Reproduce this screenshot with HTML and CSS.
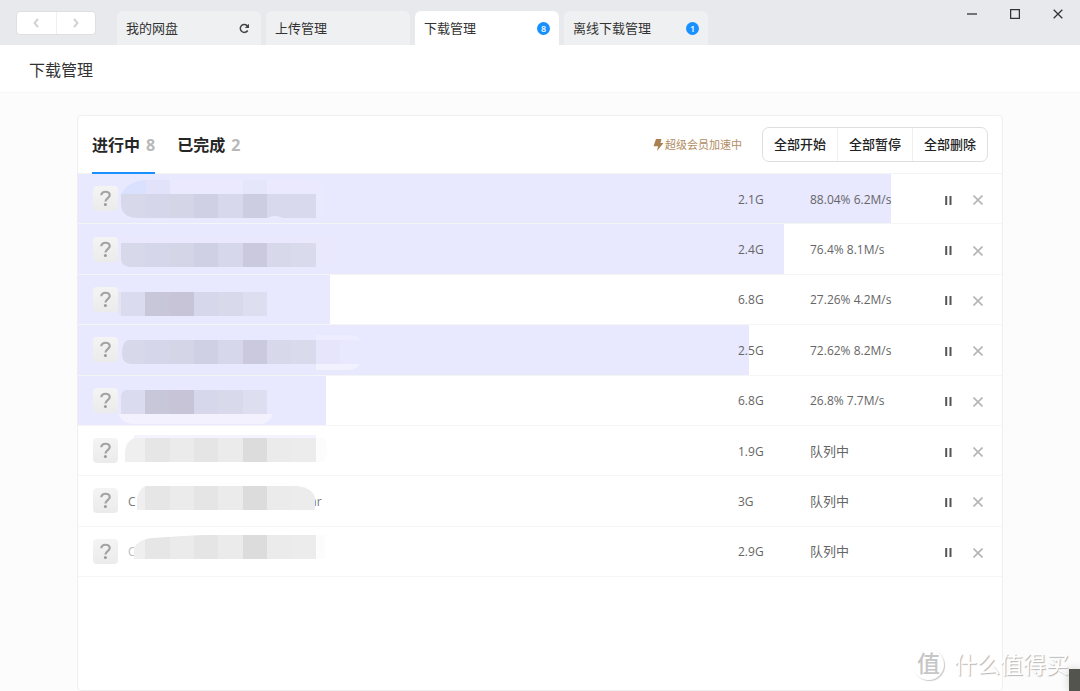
FILE: index.html
```html
<!DOCTYPE html>
<html lang="zh-CN">
<head>
<meta charset="utf-8">
<meta name="viewport" content="width=device-width, initial-scale=1">
<title>下载管理</title>
<link rel="stylesheet" href="styles.css">
</head>
<body>
<div class="app">
  <header class="titlebar">
    <div class="history">
      <button class="history-btn" aria-label="后退"><svg width="6" height="10" viewBox="0 0 6 10"><path d="M5 .8 1.500 5 5 9.200"/></svg></button>
      <button class="history-btn" aria-label="前进"><svg width="6" height="10" viewBox="0 0 6 10"><path d="M1 .8 4.500 5 1 9.200"/></svg></button>
    </div>
    <nav class="tabs">
      <a class="tab" href="#disk">我的网盘<svg class="reload" width="11" height="11" viewBox="0 0 11 11"><path d="M8.700 7.500A4 4 0 1 1 8.500 3"/><path class="tip" d="M10 .8V5H5.800z"/></svg></a>
      <a class="tab" href="#upload">上传管理</a>
      <a class="tab tab-active" href="#download">下载管理<span class="badge">8</span></a>
      <a class="tab" href="#offline">离线下载管理<span class="badge">1</span></a>
    </nav>
    <div class="window-controls">
      <button aria-label="最小化"><svg width="10" height="10" viewBox="0 0 10 10"><path d="M0 5h10"/></svg></button>
      <button aria-label="最大化"><svg width="10" height="10" viewBox="0 0 10 10"><rect x=".6" y=".6" width="8.800" height="8.800"/></svg></button>
      <button aria-label="关闭"><svg width="10" height="10" viewBox="0 0 10 10"><path d="m.7.700 8.600 8.600M9.300.700.700 9.300"/></svg></button>
    </div>
  </header>
  <h1 class="page-title">下载管理</h1>
  <main class="content">
    <section class="card">
      <div class="card-head">
        <a class="filter filter-active" href="#running">进行中<span>8</span></a>
        <a class="filter" href="#done">已完成<span>2</span></a>
        <p class="boost"><svg width="11" height="12" viewBox="0 0 11 12"><path d="M3 0h5.500L7.500 4H10.500L4 12 5 7.200H.5z"/></svg>超级会员加速中</p>
        <div class="actions">
          <button>全部开始</button>
          <button>全部暂停</button>
          <button>全部删除</button>
        </div>
      </div>
      <ul class="downloads" id="downloads"></ul>
    </section>
  </main>
  <div class="watermark" aria-hidden="true"><span class="mark">值</span><span class="mark-text">什么值得买</span></div>
  <div class="corner"></div>
</div>
<script src="app.js"></script>
</body>
</html>
```
FILE: styles.css
```css
* { box-sizing: border-box; }
body {
  margin: 0;
  color: #333;
  background: #fcfcfc;
  font: 13px/20px "Open Sans", "Noto Sans CJK SC", sans-serif;
}
button { padding: 0; border: 0; background: none; font: inherit; color: inherit; }
a { color: inherit; text-decoration: none; }
svg { display: block; }
.app { position: relative; display: flex; flex-direction: column; min-height: 100vh; overflow: hidden; }

.titlebar { display: flex; align-items: flex-start; height: 45px; padding: 11px 16px 0; background: #e8e9ed; }
.history { display: flex; width: 80px; height: 24px; margin-right: 21px; background: #fff; border: 1px solid #dfdfe1; border-radius: 4px; }
.history-btn { flex: 1; display: grid; place-items: center; }
.history-btn + .history-btn { border-left: 1px solid #f0f0f0; }
.history svg { fill: none; stroke: #d2d2d2; stroke-width: 2; }
.tabs { display: flex; gap: 5px; }
.tab {
  display: flex; align-items: center; justify-content: space-between;
  width: 144px; height: 34px; padding: 0 9px;
  background: #eff0f2; border-radius: 6px 6px 0 0;
}
.tab-active { background: #fff; }
.reload { margin-right: 2px; fill: none; stroke: #444; stroke-width: 1.5; }
.reload .tip { fill: #444; stroke: none; }
.badge { width: 13px; height: 13px; border-radius: 50%; background: #1890ff; color: #fff; font-size: 9px; font-weight: 600; line-height: 13px; text-align: center; }
.window-controls { display: flex; gap: 33px; margin: -2px 1px 0 auto; }
.window-controls svg { fill: none; stroke: #333; stroke-width: 1.3; }

.page-title { margin: 0; padding: 13px 29px 9px; height: 48px; background: #fff; border-bottom: 1px solid #f7f7f7; font-size: 16px; line-height: 25px; font-weight: 400; }
.content { flex: 1; display: flex; padding: 22px 77px 0; }
.card { flex: 1; background: #fff; border: 1px solid #efefef; border-radius: 4px; }
.card-head { display: flex; align-items: center; height: 58px; padding: 0 14px; border-bottom: 1px solid #f4f4f5; }
.filter { align-self: stretch; margin: 0 22px -1px 0; font-size: 16px; line-height: 58px; font-weight: 700; color: #262626; }
.filter span { margin-left: 6px; color: #b8b8b8; }
.filter-active { border-bottom: 2px solid #1890ff; }
.boost { display: flex; align-items: center; gap: 1px; margin: 0 20px 0 auto; color: #b28c62; font-size: 11px; }
.boost svg { fill: #a98052; }
.actions { display: flex; height: 35px; border: 1px solid #dedede; border-radius: 7px; }
.actions button { padding: 0 11px 2px; font-weight: 500; color: #222; }
.actions button + button { border-left: 1px solid #f0f0f0; }

.downloads { display: grid; grid-auto-rows: 1fr; min-height: 403px; margin: 0; padding: 0; list-style: none; }
.item { position: relative; display: flex; align-items: center; padding: 0 19px 0 15px; border-bottom: 1px solid #f5f5f6; color: #666; }
.progress { position: absolute; inset: 0 auto 0 0; background: #e8e8ff; }
.item > :not(.progress) { position: relative; }
.file-icon { width: 25px; height: 25px; border-radius: 4px; background: linear-gradient(#f4f4f4, #ebebeb); }
.file-icon path { fill: none; stroke: #a3a3a3; stroke-width: 2.2; }
.file-icon circle { fill: #999; }
.name { flex: 1; min-width: 0; overflow: hidden; }
.name text { font-size: 12px; fill: #777; }
.size, .status { padding-top: 2px; font-size: 12px; }
.size { width: 72px; }
.status { width: 135px; white-space: nowrap; }
.status-queued { padding-top: 0; font-size: 13px; }
.item button { padding-top: 3px; }
.pause { width: 7px; margin-right: 21px; }
.pause path { stroke: #555; stroke-width: 2; }
.remove path { stroke: #b5b5b5; stroke-width: 1.6; }

.watermark { position: absolute; right: 11px; bottom: 10px; display: flex; align-items: center; gap: 10px; color: #fff; text-shadow: 1px 1px 1px #b4b4b4; }
.mark { width: 31px; height: 31px; border-radius: 50%; box-shadow: 1px 1px 1px #c8c8c8; color: #c6c6c6; text-shadow: none; font-size: 23px; font-weight: 500; line-height: 29px; text-align: center; }
.mark-text { font-size: 23px; line-height: 34px; }
.corner { position: absolute; right: 0; bottom: 0; width: 11px; height: 22px; background: #54544e; box-shadow: 0 0 8px #ccc; }
```
FILE: app.js
```js
const lilac = ["#d8d8eb", "#d6d6ea", "#d5d5e8", "#d0d0e4", "#d6d7ea", "#cac9dd", "#d8d8eb", "#dadaed"];
const first = ["#d8d8eb", "#d6d6ea", "#d5d5e8", "#d0d0e4", "#d7d8eb", "#cdcde1", "#d8d9ed", "#d8d9ed"];
const short = ["#dbdbef", "#c8c7da", "#c7c4d7", "#d6d7ea", "#d9d9ec", "#dedef1"];
const grey = ["#efefef", "#e6e6e6", "#ebebeb", "#e5e5e5", "#ebebeb", "#dcdcdc", "#ebebeb", "#ececec"];

// Each file name is hidden by a strip of blurred cells; y is the top of the strip in the row.
const items = [
  { size: "2.1G", status: "88.04% 6.2M/s", bar: 88.04, cells: first, y: 20, shape: "M3 20H198V44H165Q157 40 149 44H20Q3 44 3 29z",
    under: '<path fill="#eae9fd" d="M3 20Q12 6 25 6H190Q207 7 207 20V30Q207 44 190 44H20z"/><path fill="#d9e1fe" d="M3 20Q12 6 28 6V20z"/><path fill="#e2e3fb" d="M28 6H52V20H28z"/><path fill="#e6e6fb" d="M125 6H149V20H125z"/>' },
  { size: "2.4G", status: "76.4% 8.1M/s", bar: 76.4, cells: lilac, y: 18, shape: "M3 18H198V42H15Q3 42 3 34z",
    under: '<path fill="#e9e8fd" d="M0 12H222V32Q222 42 205 42H0z"/>' },
  { size: "6.8G", status: "27.26% 4.2M/s", bar: 27.26, cells: short, y: 17, shape: "M3 17H149V41H3z",
    under: '<path fill="#e4e4f3" d="M0 17H3V40H0z"/>' },
  { size: "2.5G", status: "72.62% 8.2M/s", bar: 72.62, cells: lilac, y: 15, shape: "M10 15H198V39H13Q4 39 4 28Q4 17 10 15z",
    under: '<path fill="#eeedff" d="M198 10H232Q240 10 242 15H198z"/><path fill="#f2f1fe" d="M198 39H242Q238 45 230 45H198z"/><path fill="#e6e5fb" d="M198 15H222V39H198z"/>' },
  { size: "6.8G", status: "26.8% 7.7M/s", bar: 26.8, cells: short, y: 14, shape: "M8 14H149V38H3V21Q3 15 8 14z",
    under: '<path fill="#f2f1fd" d="M0 38H155Q151 48 142 48H16Q5 48 0 38z"/>' },
  { size: "1.9G", status: "队列中", cells: grey, y: 12, shape: "M16 12H198V36H7V25Q8 15 16 12z",
    under: '<path fill="#f4f3ff" d="M16 9H198V12H16z"/><path fill="#fcfcfc" d="M198 12H207Q211 24 207 36H198z"/>' },
  { size: "3G", status: "队列中", cells: grey, y: 10, shape: "M28 10H180Q194 12 197 21V34H19V23Q21 12 28 10z",
    under: '<text x="10" y="30">C</text><text x="192" y="30">ar</text>' },
  { size: "2.9G", status: "队列中", cells: grey, y: 8, shape: "M85 8H198V32H16V20Q22 12 34 11L65 9z",
    under: '<text x="10" y="29" opacity=".5">C</text><path fill="#fcfcfc" d="M198 8H207V32H198z"/>' }
];

document.getElementById("downloads").innerHTML = items.map((item, n) => {
  const cells = item.cells.map((color, i) => {
    const left = Math.round(3 + i * 24.33);
    const right = Math.round(3 + (i + 1) * 24.33);
    return `<rect x="${left}" y="${item.y}" width="${right - left}" height="24" fill="${color}"/>`;
  }).join("");
  return `<li class="item">
    ${item.bar ? `<div class="progress" style="width:${item.bar}%"></div>` : ""}
    <svg class="file-icon" viewBox="0 0 25 25"><path d="M8.300 9.200C8.300 4.600 16.700 4.600 16.700 9.300C16.700 12 12.400 12.300 12.400 15.600"/><circle cx="12.400" cy="18.600" r="1.500"/></svg>
    <div class="name"><svg width="250" height="49" viewBox="0 0 250 49"><clipPath id="strip${n}"><path d="${item.shape}"/></clipPath>${item.under}<g clip-path="url(#strip${n})">${cells}</g></svg></div>
    <span class="size">${item.size}</span>
    <span class="status${item.bar ? "" : " status-queued"}">${item.status}</span>
    <button class="pause" aria-label="暂停"><svg width="7" height="9" viewBox="0 0 7 9"><path d="M1.200 0v9M5.500 0v9"/></svg></button>
    <button class="remove" aria-label="删除"><svg width="10" height="10" viewBox="0 0 10 10"><path d="m.5.500 9 9M9.500.500l-9 9"/></svg></button>
  </li>`;
}).join("");
```
